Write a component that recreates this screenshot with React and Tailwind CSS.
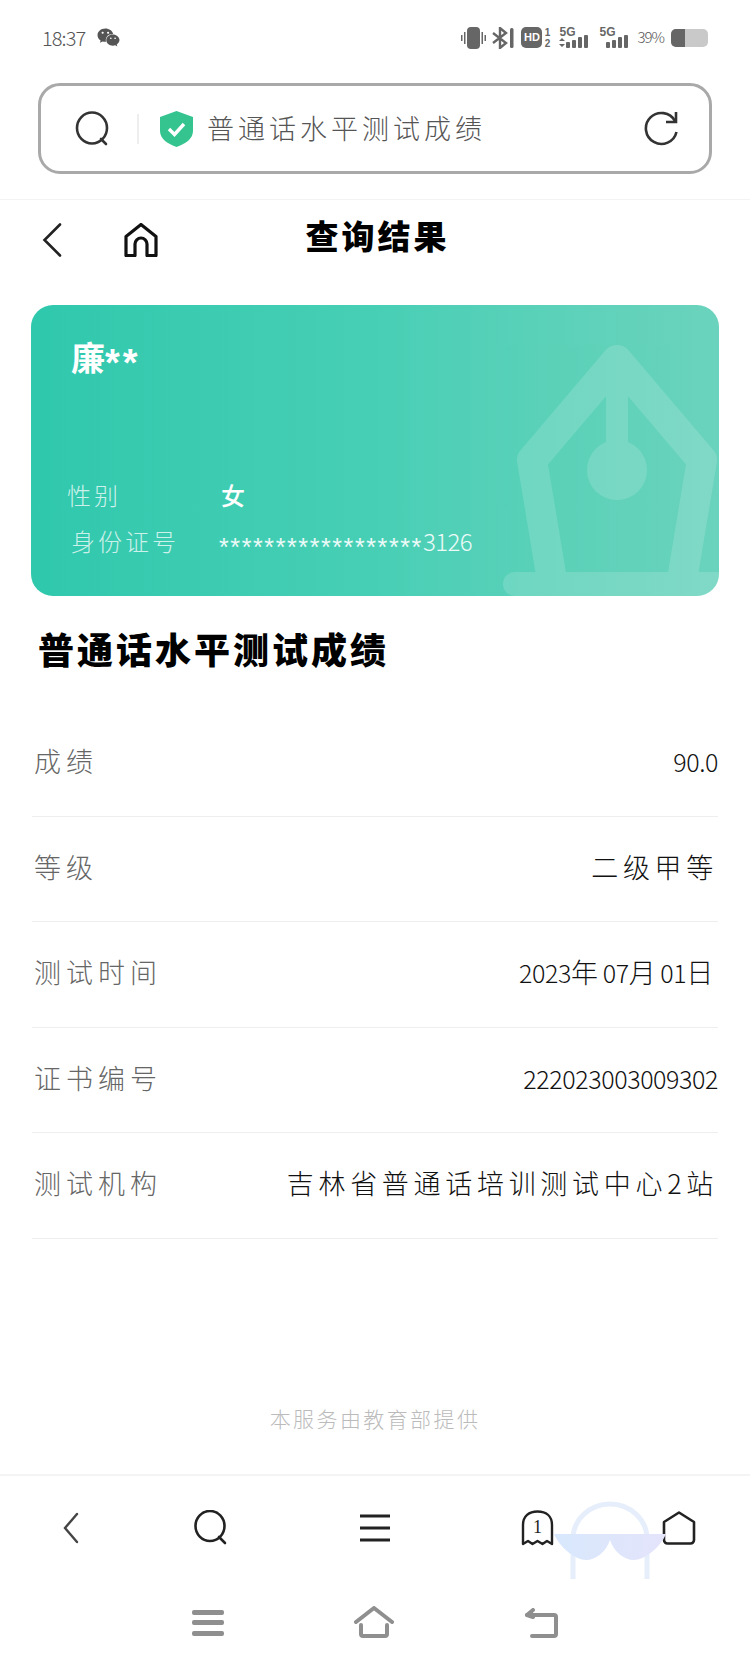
import React from "react";
import { FaWeixin } from "react-icons/fa";

const results = [
  { label: "成绩", value: <Num>90.0</Num> },
  { label: "等级", value: "二级甲等" },
  {
    label: "测试时间",
    value: (
      <>
        <Num>2023</Num>年<Num>07</Num>月<Num>01</Num>日
      </>
    ),
  },
  { label: "证书编号", value: <Num>222023003009302</Num> },
  { label: "测试机构", value: "吉林省普通话培训测试中心2站" },
];

function Num({ children }) {
  return <span className="text-[25px] tracking-[-0.4px] font-light">{children}</span>;
}

// signal bars next to the 5G labels
function Signal({ arrows }) {
  return (
    <div className="relative w-[31px] h-[21px]">
      <span className="absolute left-0 -top-[2px] text-[12px] leading-[14px] font-bold text-[#666] font-['Liberation_Sans',sans-serif]">5G</span>
      <svg width="31" height="21" viewBox="0 0 31 21" fill="#666" className="absolute inset-0">
        {arrows && <path d="M2 11l3 3H-1zM2 20l3-3H-1z" transform="translate(1 0)" />}
        <rect x="7" y="15" width="4" height="6" rx="1" />
        <rect x="13" y="13" width="4" height="8" rx="1" />
        <rect x="19" y="10" width="4" height="11" rx="1" />
        <rect x="25" y="8" width="4" height="13" rx="1" />
      </svg>
    </div>
  );
}

function StatusBar() {
  return (
    <div className="h-[83px] pl-[42px] pr-[42px] pb-[8px] flex items-center justify-between text-[#666]">
      <div className="flex items-center gap-[12px]">
        <span className="text-[20px] font-extralight tracking-[-0.9px] text-[#555]">18:37</span>
        <FaWeixin size={23} color="#555" />
      </div>
      <div className="flex items-center">
        <svg width="25" height="22" viewBox="0 0 25 22" fill="#666">
          <rect x="6" y="0" width="13" height="22" rx="4" />
          <rect x="0" y="8" width="1.5" height="6" />
          <rect x="3" y="5" width="1.5" height="12" />
          <rect x="20.5" y="5" width="1.5" height="12" />
          <rect x="23.5" y="8" width="1.5" height="6" />
        </svg>
        <svg width="22" height="22" viewBox="0 0 22 22" fill="none" stroke="#666" strokeWidth="2.4" className="ml-[6px]">
          <path d="M1 6l13 10-6 5V1l6 5L1 16" />
          <rect x="18" y="1" width="3.5" height="20" rx="1.5" fill="#666" stroke="none" />
        </svg>
        <div className="ml-[7px] w-[21px] h-[21px] rounded-[5px] bg-[#666] text-white text-[11px] font-bold flex items-center justify-center font-['Liberation_Sans',sans-serif]">HD</div>
        <div className="ml-[1px] w-[8px] flex flex-col items-center text-[10px] leading-[11px] font-bold font-['Liberation_Sans',sans-serif]">
          <span>1</span>
          <span>2</span>
        </div>
        <div className="ml-[8px]"><Signal arrows /></div>
        <div className="ml-[9px]"><Signal /></div>
        <span className="ml-[7px] text-[15px] font-extralight tracking-[-1px] text-[#555]">39%</span>
        <div className="ml-[7px] w-[37px] h-[18px] rounded-[5px] bg-[#c9c9c9] overflow-hidden">
          <div className="w-[14px] h-full bg-[#666]" />
        </div>
      </div>
    </div>
  );
}

function SearchBox() {
  return (
    <div className="mx-[38px] h-[91px] border-[3px] border-[#a9a9a9] rounded-[22px] flex items-center pl-[34px] pr-[30px]">
      <svg width="35" height="35" viewBox="0 0 35 35" fill="none" stroke="#333" strokeWidth="2.6" strokeLinecap="round">
        <ellipse cx="17" cy="17" rx="15" ry="15.5" />
        <path d="M26 28l5 5" />
      </svg>
      <div className="ml-[27px] w-[2px] h-[30px] bg-[#eeeeee]" />
      <svg width="33" height="36" viewBox="0 0 33 36" className="ml-[21px]">
        <path d="M16.5 0L33 6v14c0 8-8 13-16.5 16C8 33 0 28 0 20V6z" fill="#35c490" />
        <path d="M9 18l5.5 5.5L24 13" fill="none" stroke="#fff" strokeWidth="3.4" />
      </svg>
      <span className="ml-[14px] text-[27px] tracking-[4px] text-[#555] font-light">普通话水平测试成绩</span>
      <svg width="35" height="35" viewBox="0 0 35 35" fill="none" stroke="#333" strokeWidth="2.6" className="ml-auto">
        <path d="M31 10A15.5 15.5 0 1 0 32.5 21" />
        <path d="M32 1v10H22" />
      </svg>
    </div>
  );
}

function PageHeader() {
  return (
    <div className="mt-[25px] h-[106px] border-t border-[#f3f3f3] pb-[26px] pl-[42px] pr-[42px] grid grid-cols-3 items-center">
      <div className="flex items-center gap-[62px]">
        <svg width="20" height="34" viewBox="0 0 20 34" fill="none" stroke="#222" strokeWidth="2.6" strokeLinecap="round">
          <path d="M18 1.5L2.5 17 18 32.5" />
        </svg>
        <svg width="34" height="34" viewBox="0 0 34 34" fill="none" stroke="#111" strokeWidth="3.2" strokeLinejoin="round">
          <path d="M2 13.5L17 1.5l15 12V32.5H23V21a6 6 0 0 0-12 0v11.5H2z" />
        </svg>
      </div>
      <h1 className="pb-[8px] pl-[5px] text-center text-[33px] font-black tracking-[3px] text-black whitespace-nowrap">查询结果</h1>
      <div />
    </div>
  );
}

function ScoreCard() {
  return (
    <div className="relative mx-[31px] h-[291px] rounded-[22px] overflow-hidden bg-gradient-to-r from-[#2fc8ad] via-[#47cfb5] to-[#6bd3bd] pl-[38px] text-white">
      {/* pen nib watermark */}
      <svg width="688" height="291" viewBox="0 0 688 291" className="absolute inset-0" fill="none" stroke="#fff" opacity="0.14">
        <path d="M521 275L501 155 586 55l85 100-20 120" strokeWidth="30" strokeLinejoin="round" />
        <path d="M586 60v90" strokeWidth="22" />
        <circle cx="586" cy="165" r="30" fill="#fff" stroke="none" />
        <path d="M484 279H700" strokeWidth="24" strokeLinecap="round" />
      </svg>
      <div className="relative pt-[29px] pl-[2px] text-[34px] leading-[46px] font-bold">
        廉<span className="inline-block translate-y-[5px] tracking-[3px] text-[38px] leading-[38px] font-['Liberation_Sans',sans-serif]">**</span>
      </div>
      <div className="relative mt-[92px] flex items-center h-[46px]">
        <span className="w-[154px] -ml-[2px] text-[24px] tracking-[3px] font-light text-white/75">性别</span>
        <span className="text-[24px] font-medium">女</span>
      </div>
      <div className="relative flex items-center h-[46px]">
        <span className="w-[148px] ml-[2px] text-[24px] tracking-[3px] font-light text-white/75">身份证号</span>
        <span className="text-[24px] font-light text-white/90 whitespace-nowrap">
          <span className="inline-block translate-y-[5px] text-[25px] leading-[25px] tracking-[1.6px] font-['Liberation_Sans',sans-serif]">******************</span>
          <span className="tracking-[-0.6px]">3126</span>
        </span>
      </div>
    </div>
  );
}

function ResultRow({ label, value }) {
  return (
    <div className="h-[105.5px] pb-[4px] border-b border-[#eeeeee] flex items-center justify-between">
      <span className="pl-[2px] text-[27px] tracking-[5px] font-light text-[#666]">{label}</span>
      <span className="text-[27px] tracking-[4.7px] font-light text-[#111] whitespace-nowrap">{value}</span>
    </div>
  );
}

function BottomToolbar() {
  return (
    <div className="h-[101px] border-t-2 border-[#f4f4f4] relative flex items-center justify-between pl-[62px] pr-[54px] pt-[4px]">
      <svg width="18" height="32" viewBox="0 0 18 32" fill="none" stroke="#444" strokeWidth="2.4" strokeLinecap="round"><path d="M15 2L3 16l12 14" /></svg>
      <svg width="35" height="35" viewBox="0 0 35 35" fill="none" stroke="#222" strokeWidth="2.6" strokeLinecap="round" className="ml-[114px]">
        <ellipse cx="16" cy="16" rx="14.5" ry="15" />
        <path d="M25 27l6 6" />
      </svg>
      <svg width="32" height="28" viewBox="0 0 32 28" fill="none" stroke="#222" strokeWidth="2.8" className="ml-[130px]">
        <path d="M1 2h30M1 14h30M1 26h30" />
      </svg>
      <div className="relative w-[33px] h-[36px] ml-[130px]">
        <svg width="33" height="36" viewBox="0 0 33 36" fill="none" stroke="#222" strokeWidth="2.4" strokeLinejoin="round" className="absolute inset-0">
          <path d="M2 34V15C2 6 8 1.5 16.5 1.5S31 6 31 15v19l-5-3-4.500 3-5-3-5 3-4.500-3z" />
        </svg>
        <span className="absolute inset-x-0 top-[5px] text-center text-[18px] leading-[24px] text-[#222] font-['Liberation_Serif',serif]">1</span>
      </div>
      <svg width="34" height="34" viewBox="0 0 34 34" fill="none" stroke="#222" strokeWidth="2.6" strokeLinejoin="round" className="ml-auto">
        <path d="M2 11L17 1.500 32 11v18a3.500 3.500 0 0 1-3.500 3.500h-23A3.500 3.500 0 0 1 2 29z" />
      </svg>
      {/* floating glasses widget */}
      <svg width="112" height="80" viewBox="0 0 112 80" className="absolute left-[554px] top-[25px]" fill="none">
        <defs>
          <linearGradient id="glass" x1="0" x2="1" y1="0" y2="0">
            <stop offset="0" stopColor="#d8e8fc" />
            <stop offset="1" stopColor="#e4e4fb" />
          </linearGradient>
        </defs>
        <path d="M19 78V38a37 35 0 0 1 74 0v40" stroke="#e6eefb" strokeWidth="5" />
        <path d="M0 33h112c-6 14-22 26-32 26-10 0-20-8-24-20-4 12-14 20-24 20-10 0-26-12-32-26z" fill="url(#glass)" />
      </svg>
    </div>
  );
}

function NavBar() {
  return (
    <div className="h-[92px] relative flex items-start justify-center pt-[31px]">
      <svg width="32" height="26" viewBox="0 0 32 26" fill="#8f8f8f" className="mt-[4px]">
        <rect x="0" y="0" width="32" height="5" rx="2" />
        <rect x="0" y="10" width="32" height="5" rx="2" />
        <rect x="0" y="21" width="32" height="5" rx="2" />
      </svg>
      <svg width="40" height="32" viewBox="0 0 40 32" fill="none" stroke="#8f8f8f" strokeWidth="4" strokeLinecap="round" strokeLinejoin="round" className="ml-[130px]">
        <path d="M2 16L20 2l18 14" />
        <path d="M7 19v9a2 2 0 0 0 2 2h22a2 2 0 0 0 2-2v-9" />
      </svg>
      <svg width="34" height="30" viewBox="0 0 34 30" fill="none" stroke="#8f8f8f" strokeWidth="4" strokeLinecap="round" strokeLinejoin="round" className="ml-[130px] mt-[2px]">
        <path d="M3 7h27a2 2 0 0 1 2 2v17a2 2 0 0 1-2 2H8" />
        <path d="M9 2L3 7l6 2" fill="#8f8f8f" />
      </svg>
    </div>
  );
}

export default function App() {
  return (
    <div className="w-[750px] h-[1667px] bg-white flex flex-col font-['Noto_Sans_CJK_SC','Noto_Sans_CJK_JP',sans-serif] overflow-hidden">
      <StatusBar />
      <SearchBox />
      <PageHeader />
      <ScoreCard />
      <h2 className="mt-[26px] ml-[38px] text-[36px] leading-[52px] font-black tracking-[3px] text-black">普通话水平测试成绩</h2>
      <div className="mx-[32px] mt-[37px]">
        {results.map((row) => (
          <ResultRow key={row.label} label={row.label} value={row.value} />
        ))}
      </div>
      <div className="mt-[164px] text-center text-[21px] leading-[30px] tracking-[2.4px] font-light text-[#bbbbbb]">本服务由教育部提供</div>
      <div className="flex-1" />
      <BottomToolbar />
      <NavBar />
    </div>
  );
}
